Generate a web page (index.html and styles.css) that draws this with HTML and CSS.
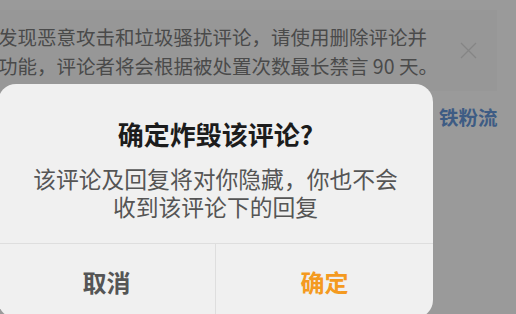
FILE: index.html
```html
<!DOCTYPE html>
<html lang="zh-CN">
<head>
<meta charset="utf-8">
<link rel="stylesheet" href="styles.css">
</head>
<body>
<div class="page">
  <div class="notice">
    <p class="notice-text">发现恶意攻击和垃圾骚扰评论，请使用删除评论并<br>功能，评论者将会根据被处置次数最长禁言 90 天。</p>
    <svg class="close" width="17" height="17" viewBox="0 0 17 17"><path d="M1 1L16 16M16 1L1 16" stroke="#858585" stroke-width="1.3" fill="none"/></svg>
  </div>
  <div class="tag-row"><span class="tag">铁粉流</span></div>

  <div class="dialog">
    <div class="dialog-body">
      <h2 class="dialog-title">确定炸毁该评论?</h2>
      <p class="dialog-msg">该评论及回复将对你隐藏，你也不会<br>收到该评论下的回复</p>
    </div>
    <div class="dialog-actions">
      <div class="btn btn-cancel">取消</div>
      <div class="btn btn-ok">确定</div>
    </div>
  </div>
</div>
</body>
</html>
```

FILE: styles.css
```css
html, body {
  margin: 0;
  padding: 0;
}
body {
  width: 516px;
  height: 314px;
  overflow: hidden;
  background: #9a9a9a;
  font-family: "Noto Sans CJK SC", "Noto Sans", sans-serif;
}
.page {
  position: relative;
  width: 516px;
  height: 314px;
  overflow: hidden;
  padding-top: 10px;
  box-sizing: border-box;
}
.notice {
  display: flex;
  align-items: center;
  width: 497px;
  height: 81px;
  background: #979797;
  box-sizing: border-box;
}
.notice-text {
  margin: 0 0 0 -2px;
  font-size: 19.5px;
  line-height: 29px;
  color: #4a4a4a;
  white-space: nowrap;
  flex: 0 0 auto;
}
.close {
  margin-left: 22px;
  margin-top: 0;
  flex: 0 0 auto;
}
.tag-row {
  padding-left: 439px;
  margin-top: 12px;
}
.tag {
  font-size: 19.5px;
  line-height: 28px;
  font-weight: 700;
  color: #3e5c84;
}
.dialog {
  position: absolute;
  left: -2px;
  top: 84px;
  width: 435px;
  height: 234px;
  border-radius: 18px;
  background: #f0f0f0;
  display: flex;
  flex-direction: column;
}
.dialog-body {
  padding-top: 32px;
  padding-bottom: 22px;
  text-align: center;
  border-bottom: 1px solid #dedede;
}
.dialog-title {
  margin: 0;
  font-size: 26px;
  line-height: 36px;
  font-weight: 700;
  color: #1c1c1c;
}
.dialog-msg {
  margin: 13px 0 0;
  font-size: 22.8px;
  line-height: 28px;
  color: #555;
}
.dialog-actions {
  flex: 1;
  display: flex;
}
.btn {
  flex: 1;
  display: flex;
  align-items: center;
  justify-content: center;
  font-size: 24px;
  font-weight: 700;
}
.btn-cancel {
  color: #555;
  border-right: 1px solid #dedede;
}
.btn-ok {
  color: #f49a20;
}
```
